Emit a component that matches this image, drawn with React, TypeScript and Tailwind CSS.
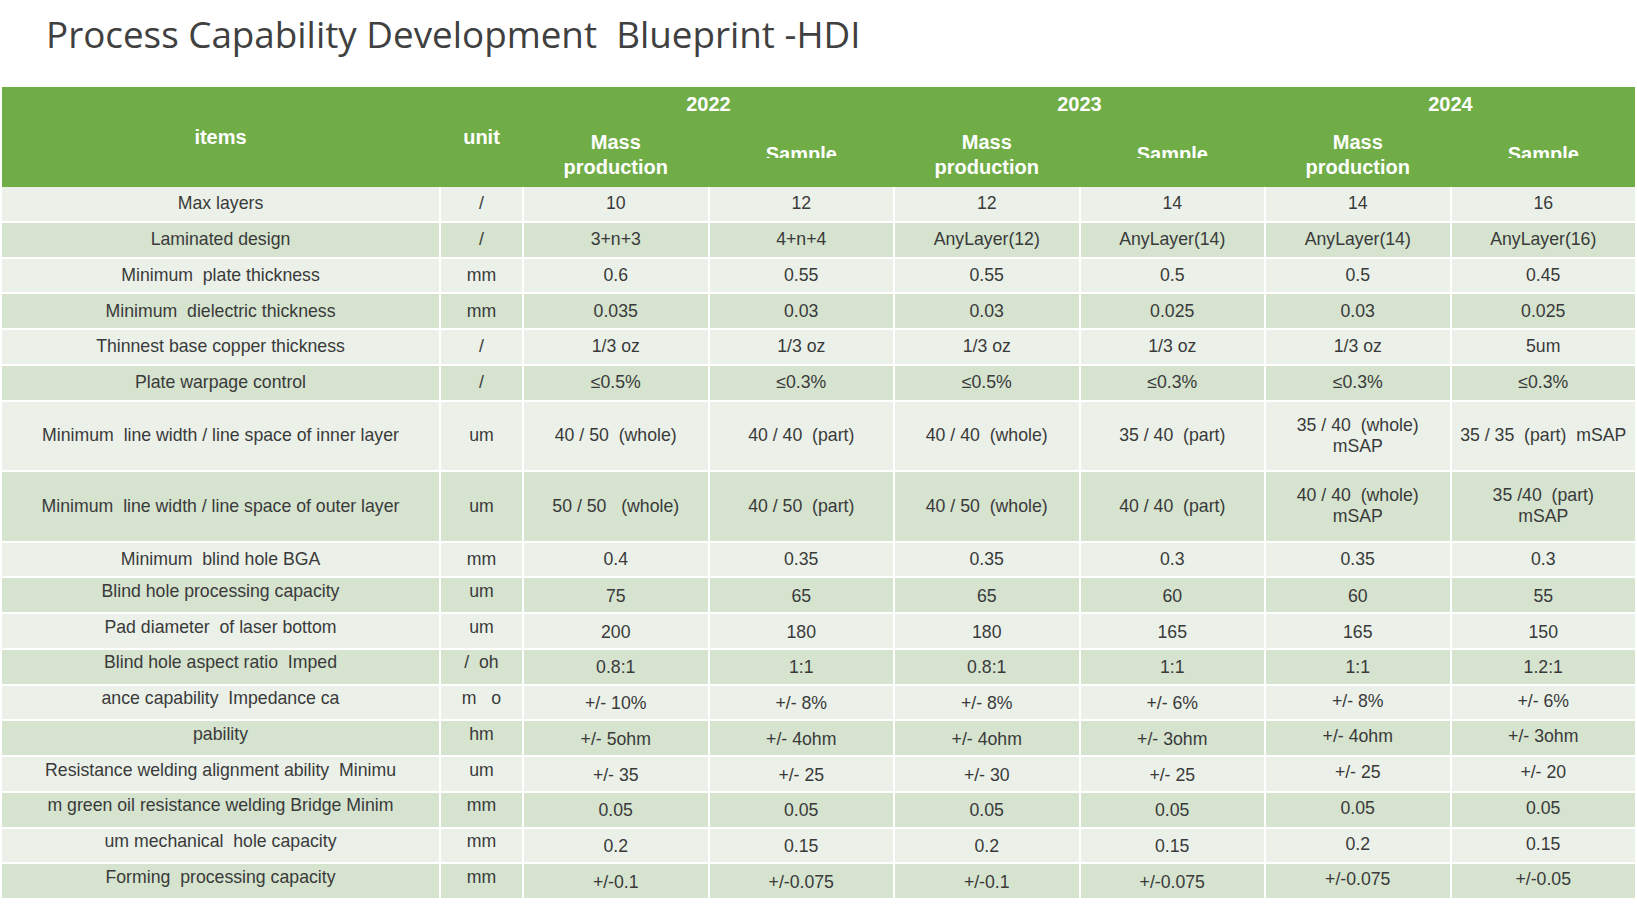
import React from 'react';

type Row = {
  cells: string[];
  tall?: boolean;
  labelShift?: boolean;
  lateShift?: boolean;
};

const ROWS: Row[] = [
  { cells: ['Max layers', '/', '10', '12', '12', '14', '14', '16'] },
  { cells: ['Laminated design', '/', '3+n+3', '4+n+4', 'AnyLayer(12)', 'AnyLayer(14)', 'AnyLayer(14)', 'AnyLayer(16)'] },
  { cells: ['Minimum  plate thickness', 'mm', '0.6', '0.55', '0.55', '0.5', '0.5', '0.45'] },
  { cells: ['Minimum  dielectric thickness', 'mm', '0.035', '0.03', '0.03', '0.025', '0.03', '0.025'] },
  { cells: ['Thinnest base copper thickness', '/', '1/3 oz', '1/3 oz', '1/3 oz', '1/3 oz', '1/3 oz', '5um'] },
  { cells: ['Plate warpage control', '/', '≤0.5%', '≤0.3%', '≤0.5%', '≤0.3%', '≤0.3%', '≤0.3%'] },
  {
    tall: true,
    cells: [
      'Minimum  line width / line space of inner layer',
      'um',
      '40 / 50  (whole)',
      '40 / 40  (part)',
      '40 / 40  (whole)',
      '35 / 40  (part)',
      '35 / 40  (whole)\nmSAP',
      '35 / 35  (part)  mSAP',
    ],
  },
  {
    tall: true,
    cells: [
      'Minimum  line width / line space of outer layer',
      'um',
      '50 / 50   (whole)',
      '40 / 50  (part)',
      '40 / 50  (whole)',
      '40 / 40  (part)',
      '40 / 40  (whole)\nmSAP',
      '35 /40  (part)\nmSAP',
    ],
  },
  { cells: ['Minimum  blind hole BGA', 'mm', '0.4', '0.35', '0.35', '0.3', '0.35', '0.3'] },
  { labelShift: true, cells: ['Blind hole processing capacity', 'um', '75', '65', '65', '60', '60', '55'] },
  { labelShift: true, cells: ['Pad diameter  of laser bottom', 'um', '200', '180', '180', '165', '165', '150'] },
  { labelShift: true, cells: ['Blind hole aspect ratio  Imped', '/  oh', '0.8:1', '1:1', '0.8:1', '1:1', '1:1', '1.2:1'] },
  { labelShift: true, lateShift: true, cells: ['ance capability  Impedance ca', 'm   o', '+/- 10%', '+/- 8%', '+/- 8%', '+/- 6%', '+/- 8%', '+/- 6%'] },
  { labelShift: true, lateShift: true, cells: ['pability', 'hm', '+/- 5ohm', '+/- 4ohm', '+/- 4ohm', '+/- 3ohm', '+/- 4ohm', '+/- 3ohm'] },
  { labelShift: true, lateShift: true, cells: ['Resistance welding alignment ability  Minimu', 'um', '+/- 35', '+/- 25', '+/- 30', '+/- 25', '+/- 25', '+/- 20'] },
  { labelShift: true, lateShift: true, cells: ['m green oil resistance welding Bridge Minim', 'mm', '0.05', '0.05', '0.05', '0.05', '0.05', '0.05'] },
  { labelShift: true, lateShift: true, cells: ['um mechanical  hole capacity', 'mm', '0.2', '0.15', '0.2', '0.15', '0.2', '0.15'] },
  { labelShift: true, lateShift: true, cells: ['Forming  processing capacity', 'mm', '+/-0.1', '+/-0.075', '+/-0.1', '+/-0.075', '+/-0.075', '+/-0.05'] },
];

const YEARS = ['2022', '2023', '2024'];

function Header() {
  return (
    <div className="grid h-[100px] grid-cols-[437px_81px_repeat(6,minmax(0,1fr))] grid-rows-[29px_1fr] gap-x-[2px] bg-[#70ad47] text-[20px] font-bold text-white">
      <div className="row-span-2 flex items-center justify-center leading-[24px]">items</div>
      <div className="row-span-2 flex items-center justify-center leading-[24px]">unit</div>
      {YEARS.map((y) => (
        <div key={y} className="col-span-2 pt-[5px] text-center leading-[24px]">
          {y}
        </div>
      ))}
      {YEARS.map((y) => (
        <React.Fragment key={y + 'sub'}>
          <div className="pt-[14px] text-center leading-[25px]">
            Mass
            <br />
            production
          </div>
          <div className="pt-[26px]">
            {/* clipped in the source slide too */}
            <div className="h-[16px] overflow-hidden text-center leading-[25px]">Sample</div>
          </div>
        </React.Fragment>
      ))}
    </div>
  );
}

function DataRow({ row, index }: { row: Row; index: number }) {
  const bg = index % 2 === 0 ? 'bg-[#ebf1e9]' : 'bg-[#d5e3cf]';
  const h = row.tall ? 'h-[68.6px]' : 'h-[33.75px]';
  return (
    <div className="grid grid-cols-[437px_81px_repeat(6,minmax(0,1fr))] gap-x-[2px]">
      {row.cells.map((c, i) => {
        let shift = '';
        if (row.labelShift && i < 2) shift = 'pb-[8px]';
        else if (row.labelShift && row.lateShift && i >= 6) shift = 'pb-[3px]';
        else if (row.labelShift) shift = 'pt-[2px]';
        return (
          <div
            key={i}
            className={`${bg} ${h} ${shift} flex items-center justify-center whitespace-pre text-center leading-[21px]`}
          >
            {c}
          </div>
        );
      })}
    </div>
  );
}

export default function App() {
  return (
    <div className="h-[905px] w-[1637px] overflow-hidden bg-white">
      <div className="h-[87px] pl-[46px] pt-[9px]">
        <h1 className="whitespace-pre font-['Open_Sans',sans-serif] text-[36.8px] leading-[50px] text-[#404040]">
          Process Capability Development  Blueprint -HDI
        </h1>
      </div>
      <div className="px-[2px] font-['Liberation_Sans',Arial,sans-serif]">
        <Header />
        <div className="flex flex-col gap-[2px] text-[17.7px] text-[#3a3a3a]">
          {ROWS.map((r, i) => (
            <DataRow key={i} row={r} index={i} />
          ))}
        </div>
      </div>
    </div>
  );
}
